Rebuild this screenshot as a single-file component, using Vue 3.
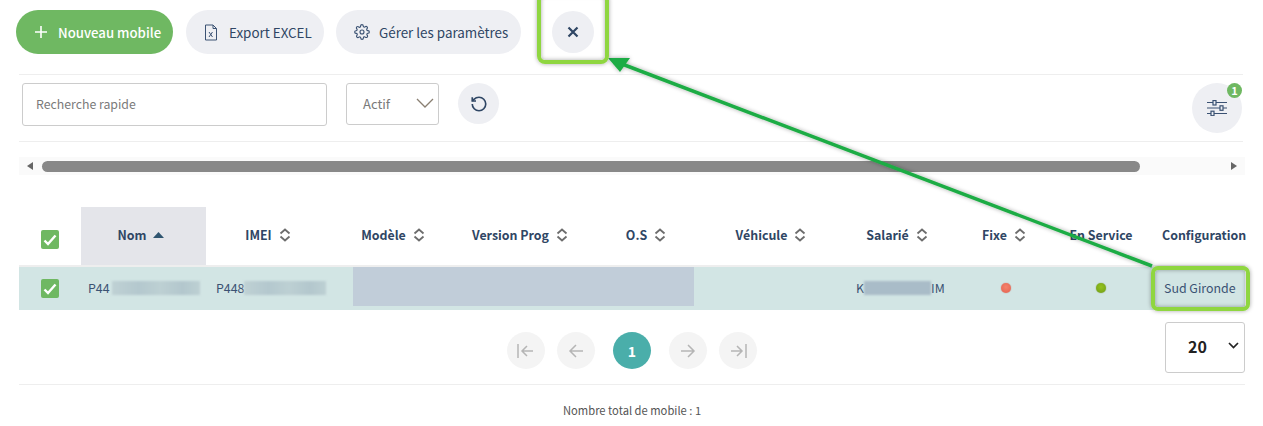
<script setup>
const colonnes = [
  { nom: 'Nom', largeur: 125, actif: true },
  { nom: 'IMEI', largeur: 124 },
  { nom: 'Modèle', largeur: 126 },
  { nom: 'Version Prog', largeur: 128 },
  { nom: 'O.S', largeur: 124 },
  { nom: 'Véhicule', largeur: 126 },
  { nom: 'Salarié', largeur: 126 },
  { nom: 'Fixe', largeur: 88 },
  { nom: 'En Service', largeur: 106, sansTri: true },
]
</script>

<template>
  <div class="page">
    <!-- Barre d'actions -->
    <div class="toolbar">
      <button class="btn btn-vert">
        <svg width="14" height="14" viewBox="0 0 14 14"><path d="M7 1v12M1 7h12" stroke="#fff" stroke-width="1.6" /></svg>
        Nouveau mobile
      </button>
      <button class="btn btn-gris">
        <svg width="14" height="17" viewBox="0 0 14 17" fill="none" stroke="#3b5273" stroke-width="1">
          <path d="M1.5 1h7.5l3.5 3.5v11.500h-11z" />
          <path d="M9 1v3.500h3.500" />
          <path d="M5 8l3.500 5M8.500 8l-3.500 5" />
        </svg>
        Export EXCEL
      </button>
      <button class="btn btn-gris">
        <svg width="16" height="16" viewBox="0 0 24 24" fill="none" stroke="#3b5273" stroke-width="1.700">
          <circle cx="12" cy="12" r="3" />
          <path d="M19.400 15a1.650 1.650 0 0 0 .33 1.820l.06.06a2 2 0 1 1-2.830 2.830l-.06-.06a1.650 1.650 0 0 0-2.800 1.170V21a2 2 0 1 1-4 0v-.09a1.650 1.650 0 0 0-2.800-1.170l-.06.06a2 2 0 1 1-2.830-2.830l.06-.06a1.650 1.650 0 0 0-1.170-2.800H3a2 2 0 1 1 0-4h.09a1.650 1.650 0 0 0 1.170-2.800l-.06-.06a2 2 0 1 1 2.830-2.830l.06.06a1.650 1.650 0 0 0 2.800-1.170V3a2 2 0 1 1 4 0v.09a1.650 1.650 0 0 0 2.800 1.170l.06-.06a2 2 0 1 1 2.830 2.830l-.06.06a1.650 1.650 0 0 0 1.170 2.800H21a2 2 0 1 1 0 4h-.09a1.650 1.650 0 0 0-1.510 1z" />
        </svg>
        Gérer les paramètres
      </button>
      <button class="btn-rond btn-fermer">
        <svg width="12" height="12" viewBox="0 0 12 12"><path d="M1.500 1.500l9 9M10.500 1.500l-9 9" stroke="#2f4664" stroke-width="2.200" /></svg>
      </button>
    </div>

    <!-- Filtres -->
    <div class="filtres">
      <input class="recherche" placeholder="Recherche rapide" />
      <div class="select-actif">
        <span>Actif</span>
        <svg width="18" height="10" viewBox="0 0 18 10" fill="none"><path d="M1 1l8 8 8-8" stroke="#8a7f72" stroke-width="1.300" /></svg>
      </div>
      <button class="btn-rond btn-reset">
        <svg width="18" height="18" viewBox="0 0 24 24" fill="none" stroke="#2f4664" stroke-width="2.200">
          <path d="M3 12a9 9 0 1 0 9-9 9.750 9.750 0 0 0-6.740 2.740L3 8" />
          <path d="M3 3v5h5" />
        </svg>
      </button>
      <button class="btn-rond btn-reglages">
        <svg width="20" height="16" viewBox="0 0 20 16" fill="none" stroke="#3b5273" stroke-width="1.200">
          <path d="M0 2.500h20M0 8h20M0 13.500h20" />
          <rect x="6" y="0.500" width="3" height="4.500" fill="#eeeff3" />
          <rect x="13" y="5.800" width="3" height="4.500" fill="#eeeff3" />
          <rect x="4" y="11.200" width="3" height="4.500" fill="#eeeff3" />
        </svg>
        <span class="pastille">1</span>
      </button>
    </div>

    <!-- Barre de défilement -->
    <div class="defilement">
      <span class="fleche fleche-g"></span>
      <div class="curseur"></div>
      <span class="fleche fleche-d"></span>
    </div>

    <!-- Tableau -->
    <div class="entete">
      <div class="col-check">
        <span class="check">
          <svg width="14" height="12" viewBox="0 0 14 12" fill="none"><path d="M1.500 6.500l3.500 3.500 7.500-8.500" stroke="#fff" stroke-width="2.400" /></svg>
        </span>
      </div>
      <div
        v-for="c in colonnes"
        :key="c.nom"
        class="th"
        :class="{ actif: c.actif }"
        :style="{ width: c.largeur + 'px' }"
      >
        {{ c.nom }}
        <svg v-if="c.actif" width="11" height="6" viewBox="0 0 11 6"><path d="M5.500 0l5.500 6h-11z" fill="#2f5570" /></svg>
        <svg v-else-if="!c.sansTri" width="12" height="14" viewBox="0 0 12 14" fill="none" stroke="#6d6d6d" stroke-width="1.800">
          <path d="M1.500 5.500l4.500-4 4.500 4M1.500 8.500l4.500 4 4.500-4" />
        </svg>
      </div>
      <div class="th th-config">Configuration</div>
    </div>

    <div class="ligne">
      <div class="col-check">
        <span class="check">
          <svg width="14" height="12" viewBox="0 0 14 12" fill="none"><path d="M1.500 6.500l3.500 3.500 7.500-8.500" stroke="#fff" stroke-width="2.400" /></svg>
        </span>
      </div>
      <div class="td td-nom">P44<span class="flou flou-nom"></span></div>
      <div class="td td-imei">P448<span class="flou flou-imei"></span></div>
      <div class="masque"></div>
      <div class="td td-vehicule"></div>
      <div class="td td-salarie">K<span class="flou flou-salarie"></span>IM</div>
      <div class="td td-fixe"><span class="point rouge"></span></div>
      <div class="td td-service"><span class="point vert"></span></div>
      <div class="td td-config">Sud Gironde</div>
    </div>

    <!-- Pagination -->
    <div class="pagination">
      <div class="pages">
        <button class="page-btn">
          <svg width="18" height="14" viewBox="0 0 18 14" fill="none" stroke="#b5b5b5" stroke-width="1.500"><path d="M1 0v14M16 7H5M10 2L5 7l5 5" /></svg>
        </button>
        <button class="page-btn">
          <svg width="16" height="16" viewBox="0 0 16 16" fill="none" stroke="#b5b5b5" stroke-width="1.500"><path d="M15 8H2M8 2L2 8l6 6" /></svg>
        </button>
        <button class="page-btn page-active">1</button>
        <button class="page-btn">
          <svg width="16" height="16" viewBox="0 0 16 16" fill="none" stroke="#b5b5b5" stroke-width="1.500"><path d="M1 8h13M8 2l6 6-6 6" /></svg>
        </button>
        <button class="page-btn">
          <svg width="18" height="14" viewBox="0 0 18 14" fill="none" stroke="#b5b5b5" stroke-width="1.500"><path d="M17 0v14M2 7h11M8 2l5 5-5 5" /></svg>
        </button>
      </div>
      <div class="taille">
        <span>20</span>
        <svg width="11" height="7" viewBox="0 0 11 7" fill="none"><path d="M1 1l4.500 4.500 4.500-4.500" stroke="#222" stroke-width="1.700" /></svg>
      </div>
    </div>

    <p class="total">Nombre total de mobile : 1</p>

    <!-- Annotations posées par-dessus la capture -->
    <svg class="annotations" width="1263" height="426" viewBox="0 0 1263 426">
      <defs>
        <filter id="ombre" x="-20%" y="-20%" width="140%" height="140%">
          <feDropShadow dx="0" dy="0" stdDeviation="2" flood-color="#000" flood-opacity="0.35" />
        </filter>
      </defs>
      <g filter="url(#ombre)">
        <path d="M1152 266L622 64" stroke="#1fac44" stroke-width="3.500" fill="none" />
        <path d="M608 58L630 58L620 72z" fill="#1fac44" />
      </g>
      <g fill="none" stroke="#8fd640" stroke-width="4" filter="url(#ombre)">
        <rect x="539" y="-6" width="68" height="68" rx="6" />
        <rect x="1153" y="268" width="95" height="41" rx="5" />
      </g>
    </svg>
  </div>
</template>

<style scoped>
.page {
  position: relative;
  width: 1263px;
  height: 426px;
  box-sizing: border-box;
  padding: 10px 18px 0 19px;
  overflow: hidden;
  background: #fff;
  font-family: "Noto Sans CJK SC", "Noto Sans", sans-serif;
  font-size: 12.4px;
  color: #3b5273;
}

button {
  font-family: inherit;
  border: none;
  padding: 0;
}

.toolbar {
  display: flex;
  gap: 13px;
  height: 44px;
  margin-left: -3px;
  padding-bottom: 20px;
  margin-right: 2px;
  position: relative;
}
.toolbar::after {
  content: "";
  position: absolute;
  left: 3px;
  right: 0;
  bottom: -1px;
  border-bottom: 1px solid #eee;
}

.btn {
  display: flex;
  align-items: center;
  height: 44px;
  padding-left: 18px;
  border-radius: 22px;
  font-size: 13.4px;
}
.btn-vert {
  width: 157px;
  gap: 10px;
  background: #6fb862;
  color: #fff;
  font-size: 13.200px;
  font-weight: 500;
}
.btn-gris {
  background: #eeeff3;
  color: #2f4664;
}
.btn-gris:nth-child(2) {
  width: 138px;
  gap: 11px;
}
.btn-gris:nth-child(3) {
  width: 185px;
  gap: 9px;
  margin-left: -1px;
}

.btn-rond {
  display: flex;
  align-items: center;
  justify-content: center;
  border-radius: 50%;
  background: #eeeff3;
}
.btn-fermer {
  width: 42px;
  height: 42px;
  margin: 1px 0 0 18px;
}

.filtres {
  display: flex;
  align-items: flex-start;
  height: 68px;
  padding: 9px 2px 0 3px;
  box-sizing: border-box;
  margin-right: 0;
  width: 1224px;
  border-bottom: 1px solid #eee;
}
.recherche {
  box-sizing: border-box;
  width: 305px;
  height: 43px;
  padding: 0 13px 2px;
  border: 1px solid #ccc;
  border-radius: 3px;
  outline: none;
  font-family: inherit;
  font-size: 12.300px;
}
.recherche::placeholder {
  color: #7a7a7a;
}
.select-actif {
  box-sizing: border-box;
  display: flex;
  align-items: center;
  justify-content: space-between;
  width: 93px;
  height: 42px;
  margin-left: 19px;
  padding: 0 4px 2px 16px;
  border: 1px solid #ccc;
  border-radius: 3px;
  font-size: 13px;
  color: #7a7a7a;
}
.btn-reset {
  width: 41px;
  height: 41px;
  margin-left: 19px;
}
.btn-reglages {
  position: relative;
  width: 50px;
  height: 50px;
  margin-left: auto;
  margin-right: -1px;
}
.pastille {
  position: absolute;
  top: 0;
  right: 0;
  width: 15px;
  height: 15px;
  border-radius: 50%;
  background: #6fb862;
  color: #fff;
  font-size: 11px;
  font-weight: 700;
  line-height: 15px;
  text-align: center;
}

.defilement {
  display: flex;
  align-items: center;
  justify-content: space-between;
  height: 18px;
  margin-top: 15px;
  padding: 0 8px;
  background: #fafafa;
}
.curseur {
  width: 1098px;
  height: 11px;
  margin: 0 auto 0 9px;
  border-radius: 6px;
  background: #888;
}
.fleche {
  width: 0;
  height: 0;
  border-top: 4px solid transparent;
  border-bottom: 4px solid transparent;
}
.fleche-g {
  border-right: 6px solid #666;
}
.fleche-d {
  border-left: 6px solid #666;
}

.entete {
  display: flex;
  height: 58px;
  margin-top: 32px;
  border-bottom: 2px solid #eee;
  box-sizing: content-box;
  width: 1226px;
}
.col-check {
  flex: 0 0 62px;
  box-sizing: border-box;
  padding-left: 22px;
}
.entete .col-check {
  padding-top: 23px;
}
.ligne .col-check {
  padding-top: 12px;
}
.check {
  display: flex;
  align-items: center;
  justify-content: center;
  width: 18px;
  height: 19px;
  border-radius: 2px;
  background: #6fb862;
}

.th {
  display: flex;
  flex: none;
  align-items: center;
  justify-content: center;
  gap: 7px;
  padding-bottom: 2px;
  box-sizing: border-box;
  color: #2f4664;
  font-weight: 700;
  font-size: 12.4px;
  white-space: nowrap;
}
.th.actif {
  padding-right: 5px;
  background: #e4e5ea;
}
.th-config {
  justify-content: flex-start;
  padding-left: 8px;
}

.ligne {
  display: flex;
  height: 43px;
  background: #d2e5e4;
}
.td {
  display: flex;
  align-items: center;
  box-sizing: border-box;
  height: 43px;
  padding-bottom: 2px;
  white-space: nowrap;
}
.td-nom {
  width: 125px;
  padding-left: 7px;
}
.td-imei {
  width: 147px;
  padding-left: 10px;
}
.masque {
  width: 341px;
  height: 39px;
  background: #c1cdd9;
}
.td-vehicule {
  width: 162px;
}
.td-salarie {
  width: 104px;
}
.td-fixe {
  width: 88px;
  padding-left: 41px;
}
.td-service {
  width: 106px;
  padding-left: 48px;
}
.td-config {
  padding-left: 10px;
}
.flou {
  display: inline-block;
  height: 14px;
  background: linear-gradient(90deg, #bfd1d4, #b4c8ce 30%, #bdd0d3 55%, #b3c7cd 80%, #bdd0d3);
  filter: blur(1px);
}
.flou-nom {
  width: 88px;
  margin-left: 2px;
}
.flou-imei {
  width: 82px;
}
.flou-salarie {
  width: 67px;
  background: #a9bcc8;
}
.point {
  width: 10px;
  height: 10px;
  border-radius: 50%;
}
.rouge {
  background: radial-gradient(circle at 50% 40%, #f4836c, #e4604e);
  box-shadow: 0 0 1px #b05a50;
}
.vert {
  background: radial-gradient(circle at 50% 40%, #94c21f, #6f9c16);
  box-shadow: 0 0 1px #5c7f1a;
}

.pagination {
  display: flex;
  justify-content: space-between;
  width: 1226px;
  height: 75px;
  padding-top: 12px;
  box-sizing: border-box;
  border-bottom: 1px solid #eee;
}
.pages {
  display: flex;
  gap: 12px;
  height: 37px;
  margin: 10px 0 0 488px;
}
.page-btn {
  display: flex;
  align-items: center;
  justify-content: center;
  width: 38px;
  height: 37px;
  border-radius: 50%;
  background: #f4f4f4;
}
.page-active {
  margin: 0 6px;
  background: #4aaeaa;
  color: #fff;
  font-size: 14px;
  font-weight: 700;
}
.taille {
  box-sizing: border-box;
  display: flex;
  align-items: center;
  justify-content: space-between;
  width: 80px;
  height: 51px;
  padding: 0 5px 4px 22px;
  border: 1px solid #ccc;
  border-radius: 3px;
  color: #222;
  font-size: 16px;
  font-weight: 700;
}

.total {
  margin: 17px 0 0 544px;
  color: #555;
  font-size: 11.200px;
}

.annotations {
  position: absolute;
  top: 0;
  left: 0;
  pointer-events: none;
}
</style>
